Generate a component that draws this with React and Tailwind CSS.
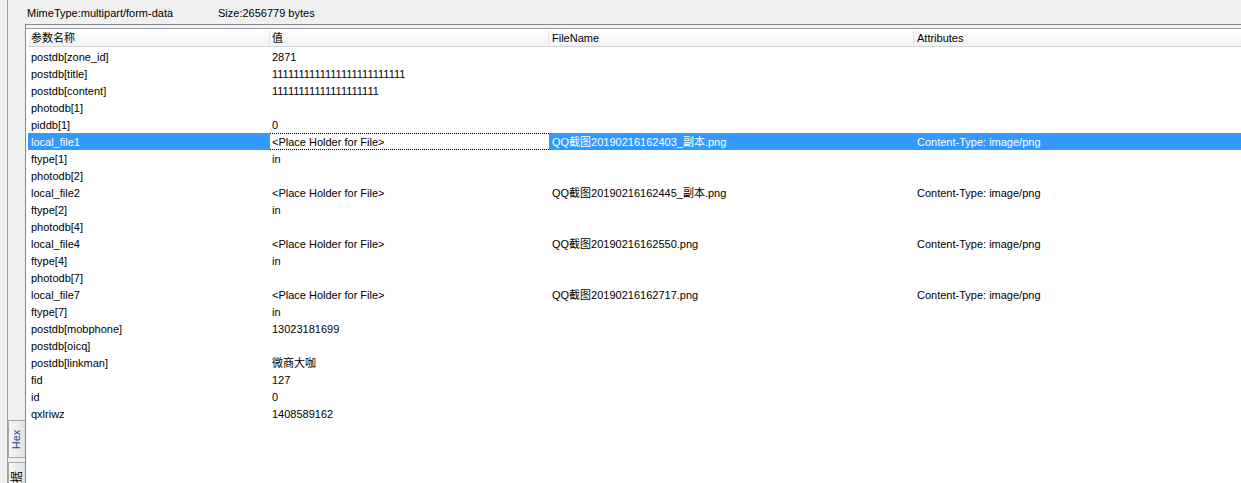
const rows = [
  ["postdb[zone_id]", "2871", "", ""],
  ["postdb[title]", "1111111111111111111111111", "", ""],
  ["postdb[content]", "11111111111111111111", "", ""],
  ["photodb[1]", "", "", ""],
  ["piddb[1]", "0", "", ""],
  ["local_file1", "<Place Holder for File>", "QQ截图20190216162403_副本.png", "Content-Type: image/png"],
  ["ftype[1]", "in", "", ""],
  ["photodb[2]", "", "", ""],
  ["local_file2", "<Place Holder for File>", "QQ截图20190216162445_副本.png", "Content-Type: image/png"],
  ["ftype[2]", "in", "", ""],
  ["photodb[4]", "", "", ""],
  ["local_file4", "<Place Holder for File>", "QQ截图20190216162550.png", "Content-Type: image/png"],
  ["ftype[4]", "in", "", ""],
  ["photodb[7]", "", "", ""],
  ["local_file7", "<Place Holder for File>", "QQ截图20190216162717.png", "Content-Type: image/png"],
  ["ftype[7]", "in", "", ""],
  ["postdb[mobphone]", "13023181699", "", ""],
  ["postdb[oicq]", "", "", ""],
  ["postdb[linkman]", "微商大咖", "", ""],
  ["fid", "127", "", ""],
  ["id", "0", "", ""],
  ["qxlriwz", "1408589162", "", ""],
];

const SELECTED = 5;

function Row({ cells, selected }) {
  if (selected) {
    return (
      <div className="flex h-[17px] text-white">
        <div className="w-[242px] bg-[#3399ff] border-y border-dotted border-[#c97a3a] pl-[3px] pt-[1px] leading-[14px] whitespace-nowrap">
          {cells[0]}
        </div>
        <div className="w-[279px] bg-white border-y border-dotted border-black text-black pl-[2px] pt-[1px] leading-[14px] whitespace-nowrap">
          {cells[1]}
        </div>
        <div className="w-[365px] bg-[#3399ff] border-y border-dotted border-[#c97a3a] pl-[3px] pt-[1px] leading-[14px] whitespace-nowrap">
          {cells[2]}
        </div>
        <div className="flex-1 bg-[#3399ff] border-y border-dotted border-[#c97a3a] pl-[3px] pt-[1px] leading-[14px] whitespace-nowrap">
          {cells[3]}
        </div>
      </div>
    );
  }
  return (
    <div className="flex h-[17px] pt-[2px] leading-[15px] text-black">
      <div className="w-[242px] pl-[3px] whitespace-nowrap">{cells[0]}</div>
      <div className="w-[279px] pl-[2px] whitespace-nowrap">{cells[1]}</div>
      <div className="w-[365px] pl-[3px] whitespace-nowrap">{cells[2]}</div>
      <div className="flex-1 pl-[3px] whitespace-nowrap">{cells[3]}</div>
    </div>
  );
}

export default function App() {
  return (
    <div
      className="w-[1241px] h-[483px] bg-[#f0f0f0] overflow-hidden flex text-[11px] text-black"
      style={{ fontFamily: '"Liberation Sans", "Noto Sans CJK SC", sans-serif' }}
    >
      <div className="w-[7px] shrink-0" />
      <div className="flex-1 flex flex-col border-l border-[#a0a0a0]">
        {/* top info bar */}
        <div className="h-[24px] shrink-0 flex items-center pl-[19px] pt-[3px]">
          <span className="w-[191px]">MimeType:multipart/form-data</span>
          <span>Size:2656779 bytes</span>
        </div>

        <div className="flex-1 flex min-h-0">
          {/* side tabs */}
          <div className="w-[17px] shrink-0 flex flex-col justify-end">
            <div className="h-[38px] mb-[4px] border border-r-0 border-[#a9a9a9] bg-gradient-to-r from-[#f7f7f7] to-[#e3e3e3] flex items-center justify-center">
              <span className="-rotate-90 text-[#1c3f8c] text-[11px] leading-none">Hex</span>
            </div>
            <div className="h-[21px] border border-b-0 border-r-0 border-[#a9a9a9] bg-gradient-to-r from-[#f7f7f7] to-[#e3e3e3] overflow-hidden flex justify-center">
              <span className="-rotate-90 text-[12px] leading-none mt-[8px] whitespace-nowrap">据</span>
            </div>
          </div>

          {/* grid */}
          <div className="flex-1 border-l border-t border-[#828790] bg-white pl-[2px] flex flex-col min-w-0">
            <div className="h-[4px] bg-[#f4f4f4] border-b border-[#9a9aa0] -ml-[2px]" />
            <div className="flex h-[18px] pt-[2px] leading-[15px] bg-gradient-to-b from-white to-[#f1f2f4] border-b border-[#d5d5d5]">
              <div className="w-[242px] pl-[3px] border-r border-[#e3e3e3]">参数名称</div>
              <div className="w-[279px] pl-[2px] border-r border-[#e3e3e3]">值</div>
              <div className="w-[365px] pl-[3px] border-r border-[#e3e3e3]">FileName</div>
              <div className="flex-1 pl-[3px]">Attributes</div>
            </div>
            <div className="h-[1px]" />
            {rows.map((r, i) => (
              <Row key={i} cells={r} selected={i === SELECTED} />
            ))}
          </div>
        </div>
      </div>
    </div>
  );
}
